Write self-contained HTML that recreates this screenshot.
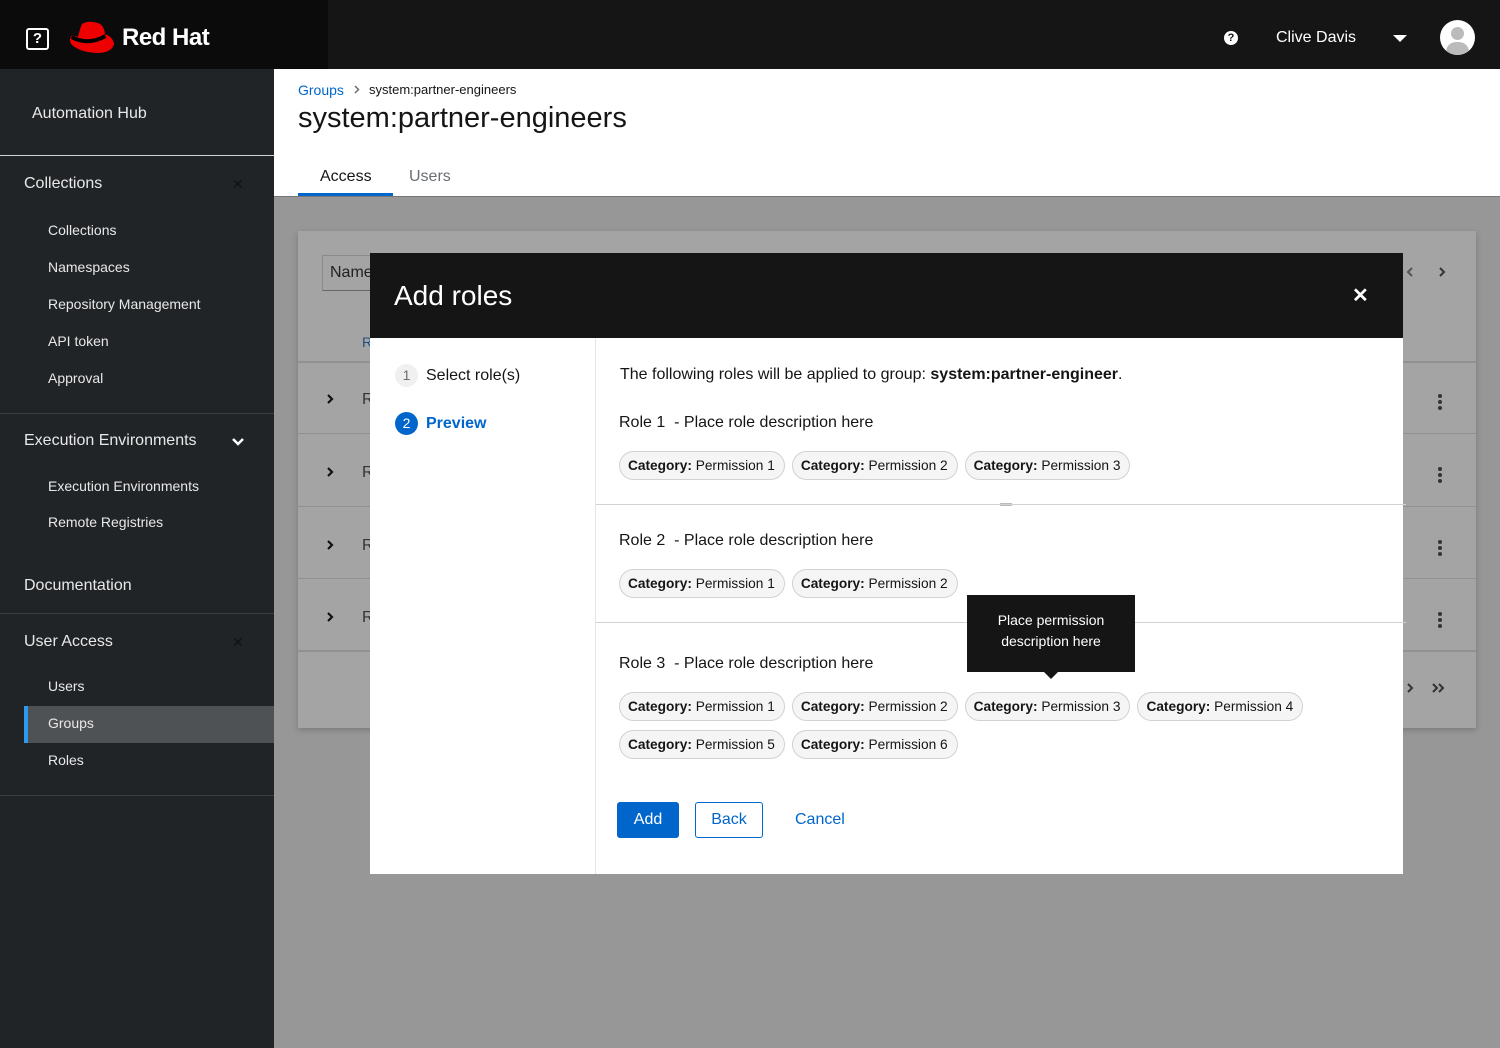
<!DOCTYPE html>
<html><head><meta charset="utf-8"><style>
*{box-sizing:border-box;margin:0;padding:0}
body{width:1500px;height:1048px;overflow:hidden;font-family:"Liberation Sans",sans-serif;background:#979797;position:relative;color:#151515}
.abs{position:absolute}
.hdr{left:0;top:0;width:1500px;height:69px;background:#151515}
.logo{left:0;top:0;width:328px;height:69px;background:#0b0b0b}
.side{left:0;top:69px;width:274px;height:979px;background:#212427;color:#fff}
.side .t{position:absolute;left:24px;font-size:16px;color:#e8e8e8}
.side .s{position:absolute;left:48px;font-size:14px;color:#e8e8e8}
.side .hr{position:absolute;left:0;width:274px;height:1px;background:#3c3f42}
.side .x{position:absolute;left:232px;font-size:14px;color:#111}
.top{left:274px;top:69px;width:1226px;height:128px;background:#fff}
.chip{display:inline-block;height:29px;line-height:27px;border:1px solid #d2d2d2;background:#f5f5f5;border-radius:15px;padding:0 9px 0 8px;font-size:13.7px;margin-right:7px;color:#151515;vertical-align:top}
.chip b{font-weight:bold}
.role{font-size:16px}
.kebab{position:absolute;left:1438px;width:4px}
.kebab i{display:block;width:4px;height:4px;border-radius:2px;background:#333;margin-bottom:2px}
.chev{position:absolute}
</style></head><body>
<div class="abs hdr"></div>
<div class="abs logo">
 <div class="abs" style="left:26px;top:28px;width:23px;height:22px;border:2px solid #fff;border-radius:3px;color:#fff;font-weight:bold;font-size:15px;text-align:center;line-height:18px">?</div>
 <svg class="abs" style="left:68px;top:20px" width="50" height="36" viewBox="0 0 50 36"><path d="M14 4 Q20 0 30 3 Q36 5 37 14 Q45 17 46 24 Q44 33 28 33 Q12 32 4 25 Q0 20 4 15 L10 17 Q12 8 14 4Z" fill="#e00"/><path d="M4 15 Q20 24 37 14 L38 18 Q20 28 3 19Z" fill="#000"/></svg>
 <div class="abs" style="left:122px;top:24px;color:#fff;font-weight:bold;font-size:24px;letter-spacing:-0.5px">Red Hat</div>
</div>
<div class="abs" style="left:1224px;top:31px;width:14px;height:14px;border-radius:7px;background:#fff;color:#151515;font-size:11px;font-weight:bold;text-align:center;line-height:14px">?</div>
<div class="abs" style="left:1276px;top:29px;color:#fff;font-size:16px">Clive Davis</div>
<div class="abs" style="left:1393px;top:35px;width:0;height:0;border-left:7px solid transparent;border-right:7px solid transparent;border-top:7px solid #fff"></div>
<div class="abs" style="left:1440px;top:20px;width:35px;height:35px;border-radius:50%;background:#fff;overflow:hidden"><div class="abs" style="left:11px;top:7px;width:13px;height:13px;border-radius:50%;background:#bbb"></div><div class="abs" style="left:6px;top:22px;width:23px;height:20px;border-radius:10px 10px 0 0;background:#bbb"></div></div>

<div class="abs side">
 <div class="t" style="left:32px;top:36px">Automation Hub</div>
 <div class="hr" style="top:86px;background:#d2d2d2"></div>
 <div class="t" style="top:106px">Collections</div><div class="x" style="top:107px">✕</div>
 <div class="s" style="top:153px">Collections</div>
 <div class="s" style="top:190px">Namespaces</div>
 <div class="s" style="top:227px">Repository Management</div>
 <div class="s" style="top:264px">API token</div>
 <div class="s" style="top:301px">Approval</div>
 <div class="hr" style="top:344px"></div>
 <div class="t" style="top:363px">Execution Environments</div>
 <svg class="abs" style="left:232px;top:368px" width="12" height="9"><path d="M1 2 L6 7 L11 2" stroke="#fff" stroke-width="2.5" fill="none"/></svg>
 <div class="s" style="top:409px">Execution Environments</div>
 <div class="s" style="top:445px">Remote Registries</div>
 <div class="t" style="top:508px">Documentation</div>
 <div class="hr" style="top:544px"></div>
 <div class="t" style="top:564px">User Access</div><div class="x" style="top:565px">✕</div>
 <div class="s" style="top:609px">Users</div>
 <div class="abs" style="left:24px;top:637px;width:250px;height:37px;background:#4f5255;border-left:4px solid #2b9af3"></div>
 <div class="s" style="top:646px">Groups</div>
 <div class="s" style="top:683px">Roles</div>
 <div class="hr" style="top:726px"></div>
</div>

<div class="abs top">
 <div class="abs" style="left:24px;top:13px;font-size:14px;color:#0066cc">Groups</div>
 <svg class="abs" style="left:80px;top:16px" width="6" height="9"><path d="M1 1 L4.5 4.5 L1 8" stroke="#6a6e73" stroke-width="1.5" fill="none"/></svg>
 <div class="abs" style="left:95px;top:13px;font-size:13px">system:partner-engineers</div>
 <div class="abs" style="left:24px;top:33px;font-size:29px">system:partner-engineers</div>
 <div class="abs" style="left:46px;top:99px;font-size:16px">Access</div>
 <div class="abs" style="left:135px;top:99px;font-size:16px;color:#6a6e73">Users</div>
 <div class="abs" style="left:24px;top:124px;width:95px;height:3px;background:#0066cc"></div>
</div>
<div class="abs" style="left:274px;top:196px;width:1226px;height:1px;background:#777"></div>

<div class="abs" style="left:298px;top:231px;width:1178px;height:497px;background:#a4a4a4;box-shadow:0 2px 6px rgba(0,0,0,.2)">
 <div class="abs" style="left:24px;top:24px;width:60px;height:36px;border:1px solid #8a8a8a;border-bottom-color:#666;font-size:16px;padding:8px 7px;color:#222">Name</div>
 <div class="abs" style="left:64px;top:103px;font-size:14px;color:#1f4f80">R</div>
 <div class="abs" style="left:0;top:130px;width:1178px;height:2px;background:#919191"></div>
 <div class="abs" style="left:0;top:202px;width:1178px;height:1px;background:#919191"></div>
 <div class="abs" style="left:0;top:275px;width:1178px;height:1px;background:#919191"></div>
 <div class="abs" style="left:0;top:347px;width:1178px;height:1px;background:#919191"></div>
 <div class="abs" style="left:0;top:419px;width:1178px;height:2px;background:#919191"></div>
 <svg class="chev" style="left:28px;top:162px" width="8" height="12"><path d="M2 2 L6 6 L2 10" stroke="#111" stroke-width="2.2" fill="none"/></svg><div class="abs" style="left:64px;top:160px;color:#333">R</div>
 <svg class="chev" style="left:28px;top:235px" width="8" height="12"><path d="M2 2 L6 6 L2 10" stroke="#111" stroke-width="2.2" fill="none"/></svg><div class="abs" style="left:64px;top:233px;color:#333">R</div>
 <svg class="chev" style="left:28px;top:308px" width="8" height="12"><path d="M2 2 L6 6 L2 10" stroke="#111" stroke-width="2.2" fill="none"/></svg><div class="abs" style="left:64px;top:306px;color:#333">R</div>
 <svg class="chev" style="left:28px;top:380px" width="8" height="12"><path d="M2 2 L6 6 L2 10" stroke="#111" stroke-width="2.2" fill="none"/></svg><div class="abs" style="left:64px;top:378px;color:#333">R</div>
 <svg class="chev" style="left:1108px;top:35px" width="8" height="12"><path d="M6 2 L2 6 L6 10" stroke="#555" stroke-width="2" fill="none"/></svg>
 <svg class="chev" style="left:1140px;top:35px" width="8" height="12"><path d="M2 2 L6 6 L2 10" stroke="#333" stroke-width="2" fill="none"/></svg>
 <svg class="chev" style="left:1108px;top:451px" width="8" height="12"><path d="M2 2 L6 6 L2 10" stroke="#333" stroke-width="2" fill="none"/></svg>
 <svg class="chev" style="left:1133px;top:451px" width="14" height="12"><path d="M2 2 L6 6 L2 10 M8 2 L12 6 L8 10" stroke="#333" stroke-width="2" fill="none"/></svg>
</div>
<div class="kebab" style="top:394px"><i></i><i></i><i></i></div>
<div class="kebab" style="top:467px"><i></i><i></i><i></i></div>
<div class="kebab" style="top:540px"><i></i><i></i><i></i></div>
<div class="kebab" style="top:612px"><i></i><i></i><i></i></div>

<div class="abs" style="left:370px;top:253px;width:1033px;height:85px;background:#151515">
 <div class="abs" style="left:24px;top:27px;color:#fff;font-size:28px">Add roles</div>
 <div class="abs" style="left:982px;top:30px;color:#fff;font-size:20px;font-weight:bold">✕</div>
</div>
<div class="abs" style="left:370px;top:338px;width:1033px;height:536px;background:#fff">
 <div class="abs" style="left:225px;top:0;width:1px;height:536px;background:#e5e5e5"></div>
 <div class="abs" style="left:25px;top:26px;width:23px;height:23px;border-radius:50%;background:#f0f0f0;color:#6a6e73;text-align:center;line-height:23px;font-size:14px">1</div>
 <div class="abs" style="left:56px;top:29px;font-size:16px">Select role(s)</div>
 <div class="abs" style="left:25px;top:74px;width:23px;height:23px;border-radius:50%;background:#0066cc;color:#fff;text-align:center;line-height:23px;font-size:14px">2</div>
 <div class="abs" style="left:56px;top:77px;font-size:16px;color:#0066cc;font-weight:bold">Preview</div>

 <div class="abs" style="left:250px;top:28px;font-size:16px">The following roles will be applied to group: <b>system:partner-engineer</b>.</div>
 <div class="abs role" style="left:249px;top:76px">Role 1 &nbsp;- Place role description here</div>
 <div class="abs" style="left:249px;top:113px;width:760px"><span class="chip"><b>Category:</b> Permission 1</span><span class="chip"><b>Category:</b> Permission 2</span><span class="chip"><b>Category:</b> Permission 3</span></div>
 <div class="abs" style="left:226px;top:166px;width:810px;height:1px;background:#d2d2d2"></div>
 <div class="abs" style="left:630px;top:165px;width:12px;height:3px;border-top:1px solid #bbb;border-bottom:1px solid #bbb"></div>
 <div class="abs role" style="left:249px;top:194px">Role 2 &nbsp;- Place role description here</div>
 <div class="abs" style="left:249px;top:231px;width:760px"><span class="chip"><b>Category:</b> Permission 1</span><span class="chip"><b>Category:</b> Permission 2</span></div>
 <div class="abs" style="left:226px;top:284px;width:810px;height:1px;background:#d2d2d2"></div>
 <div class="abs role" style="left:249px;top:317px">Role 3 &nbsp;- Place role description here</div>
 <div class="abs" style="left:249px;top:354px;width:760px"><span class="chip"><b>Category:</b> Permission 1</span><span class="chip"><b>Category:</b> Permission 2</span><span class="chip"><b>Category:</b> Permission 3</span><span class="chip"><b>Category:</b> Permission 4</span></div>
 <div class="abs" style="left:249px;top:392px;width:760px"><span class="chip"><b>Category:</b> Permission 5</span><span class="chip"><b>Category:</b> Permission 6</span></div>
 <div class="abs" style="left:597px;top:257px;width:168px;height:77px;background:#151515;color:#fff;font-size:14px;text-align:center;padding-top:15px;line-height:21px">Place permission<br>description here</div>
 <div class="abs" style="left:673px;top:333px;width:0;height:0;border-left:8px solid transparent;border-right:8px solid transparent;border-top:8px solid #151515"></div>
 <div class="abs" style="left:247px;top:464px;width:62px;height:36px;background:#0066cc;border-radius:3px;color:#fff;font-size:16px;text-align:center;line-height:36px">Add</div>
 <div class="abs" style="left:325px;top:464px;width:68px;height:36px;border:1px solid #0066cc;border-radius:3px;color:#0066cc;font-size:16px;text-align:center;line-height:34px">Back</div>
 <div class="abs" style="left:425px;top:473px;color:#0066cc;font-size:16px">Cancel</div>
</div>
</body></html>
